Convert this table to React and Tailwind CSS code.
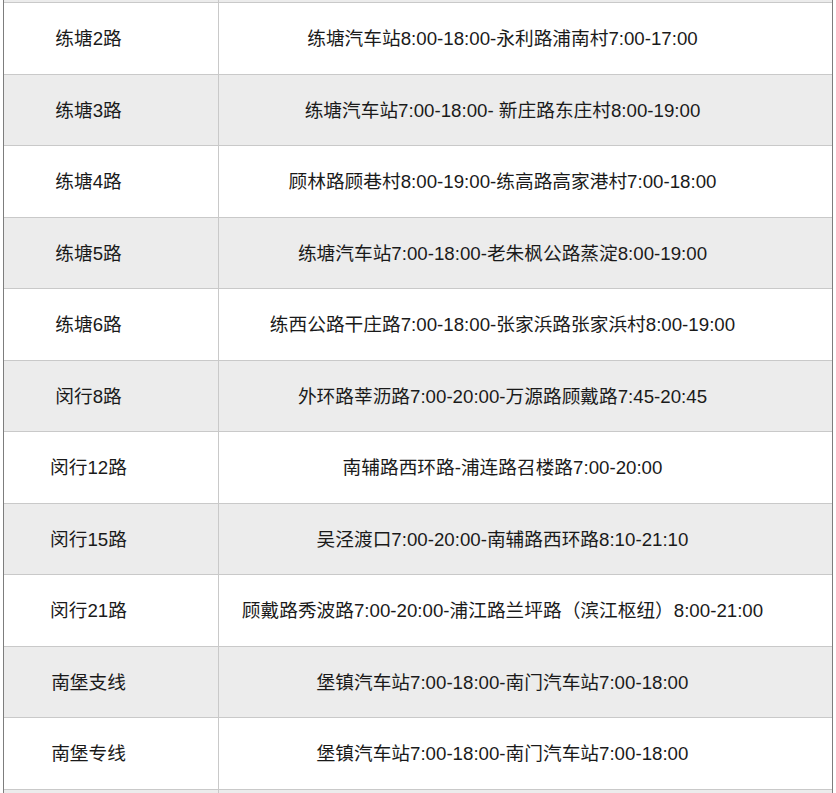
const rows = [
  ["练塘2路", "练塘汽车站8:00-18:00-永利路浦南村7:00-17:00"],
  ["练塘3路", "练塘汽车站7:00-18:00- 新庄路东庄村8:00-19:00"],
  ["练塘4路", "顾林路顾巷村8:00-19:00-练高路高家港村7:00-18:00"],
  ["练塘5路", "练塘汽车站7:00-18:00-老朱枫公路蒸淀8:00-19:00"],
  ["练塘6路", "练西公路干庄路7:00-18:00-张家浜路张家浜村8:00-19:00"],
  ["闵行8路", "外环路莘沥路7:00-20:00-万源路顾戴路7:45-20:45"],
  ["闵行12路", "南辅路西环路-浦连路召楼路7:00-20:00"],
  ["闵行15路", "吴泾渡口7:00-20:00-南辅路西环路8:10-21:10"],
  ["闵行21路", "顾戴路秀波路7:00-20:00-浦江路兰坪路（滨江枢纽）8:00-21:00"],
  ["南堡支线", "堡镇汽车站7:00-18:00-南门汽车站7:00-18:00"],
  ["南堡专线", "堡镇汽车站7:00-18:00-南门汽车站7:00-18:00"],
];

function Row({ name, route, striped }) {
  return (
    <div
      className={`flex h-[71.5px] border-b border-[#c9c9c9] ${striped ? "bg-[#ececec]" : "bg-white"}`}
    >
      <div className="w-[215px] shrink-0 flex items-center justify-center pr-[45px] pt-[2px] border-r border-[#c9c9c9]">
        {name}
      </div>
      <div className="flex-1 flex items-center justify-center pr-[46px] pt-[2px]">{route}</div>
    </div>
  );
}

export default function App() {
  return (
    <div className="w-[836px] h-[793px] overflow-hidden bg-white">
      <div
        className="ml-[3px] w-[830px] border-l border-r border-[#7d7d7d] text-[18.7px] text-[#1a1a1a]"
        style={{ fontFamily: '"Liberation Sans", "Noto Sans CJK SC", sans-serif' }}
      >
        <div className="flex h-[3px] bg-[#ececec] border-b border-[#c9c9c9]">
          <div className="w-[215px] shrink-0 border-r border-[#c9c9c9]" />
        </div>
        {rows.map(([name, route], i) => (
          <Row key={name} name={name} route={route} striped={i % 2 === 1} />
        ))}
        <div className="flex h-[10px] bg-[#ececec]">
          <div className="w-[215px] shrink-0 border-r border-[#c9c9c9]" />
        </div>
      </div>
    </div>
  );
}
